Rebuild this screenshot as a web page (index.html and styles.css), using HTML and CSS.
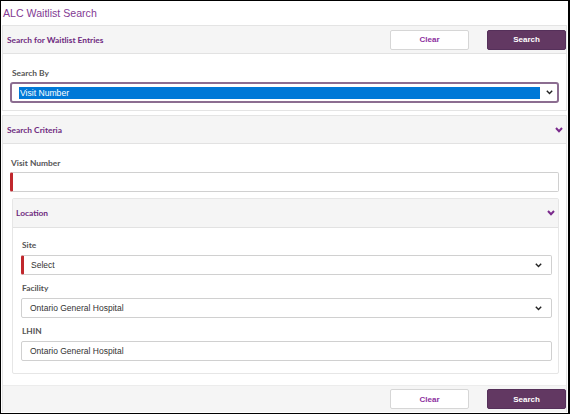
FILE: index.html
```html
<!DOCTYPE html>
<html>
<head>
<meta charset="utf-8">
<link rel="stylesheet" href="styles.css">
</head>
<body>
<div class="frame">
  <div class="title">ALC Waitlist Search</div>

  <div class="panel panel-top">
    <div class="panel-head head-top">
      <span class="head-text">Search for Waitlist Entries</span>
      <div class="actions">
        <button class="btn btn-clear">Clear</button>
        <button class="btn btn-search">Search</button>
      </div>
    </div>
    <div class="panel-body body-top">
      <div class="label">Search By</div>
      <div class="select-focus">
        <span class="highlight">Visit Number</span>
        <svg class="chev" width="7" height="5" viewBox="0 0 7 5"><polyline points="0.8,0.8 3.5,3.6 6.2,0.8" fill="none" stroke="#222" stroke-width="1.4"/></svg>
      </div>
    </div>
  </div>

  <div class="panel panel-criteria">
    <div class="panel-head head-criteria">
      <span class="head-text">Search Criteria</span>
      <svg class="pchev" width="8" height="6" viewBox="0 0 8 6"><polyline points="1,1 4,4.2 7,1" fill="none" stroke="#7a2a8c" stroke-width="2"/></svg>
    </div>
    <div class="panel-body body-criteria">
      <div class="label">Visit Number</div>
      <div class="input required"></div>

      <div class="subpanel">
        <div class="panel-head head-location">
          <span class="head-text">Location</span>
          <svg class="pchev" width="8" height="6" viewBox="0 0 8 6"><polyline points="1,1 4,4.2 7,1" fill="none" stroke="#7a2a8c" stroke-width="2"/></svg>
        </div>
        <div class="sub-body">
          <div class="field">
            <div class="label">Site</div>
            <div class="input select required">
              <span class="value">Select</span>
              <svg class="chev" width="7" height="5" viewBox="0 0 7 5"><polyline points="0.8,0.8 3.5,3.6 6.2,0.8" fill="none" stroke="#222" stroke-width="1.4"/></svg>
            </div>
          </div>
          <div class="field">
            <div class="label">Facility</div>
            <div class="input select">
              <span class="value">Ontario General Hospital</span>
              <svg class="chev" width="7" height="5" viewBox="0 0 7 5"><polyline points="0.8,0.8 3.5,3.6 6.2,0.8" fill="none" stroke="#222" stroke-width="1.4"/></svg>
            </div>
          </div>
          <div class="field">
            <div class="label">LHIN</div>
            <div class="input">
              <span class="value">Ontario General Hospital</span>
            </div>
          </div>
        </div>
      </div>
    </div>
    <div class="panel-foot">
      <button class="btn btn-clear">Clear</button>
      <button class="btn btn-search">Search</button>
    </div>
  </div>
</div>
</body>
</html>
```

FILE: styles.css
```css
* { box-sizing: border-box; }
html, body { margin: 0; padding: 0; background: #fff; }
body { font-family: "Liberation Sans", Arial, sans-serif; }

.frame {
  width: 570px;
  height: 414px;
  border: 1px solid #000;
  border-right-width: 2px;
  overflow: hidden;
  display: flex;
  flex-direction: column;
  background: #fff;
}

.title {
  height: 24px;
  line-height: 24px;
  padding-left: 2px;
  font-size: 10.6px;
  color: #833a93;
  flex: none;
}

.panel {
  margin: 0 1px 0 1px;
  border: 1px solid #e4e4e4;
  flex: none;
}

.panel-head {
  display: flex;
  align-items: center;
  background: #f5f5f5;
  border-bottom: 1px solid #e2e2e2;
}

.head-text {
  font-family: Lato, "Liberation Sans", sans-serif;
  font-weight: bold;
  font-size: 8.4px;
  color: #6e2a80;
}

.head-top {
  height: 28px;
  padding-left: 4px;
}

.actions {
  margin-left: auto;
  display: flex;
  gap: 18px;
  padding-right: 0;
}

.btn {
  width: 79px;
  height: 20px;
  border-radius: 2px;
  font-family: "Liberation Sans", Arial, sans-serif;
  font-weight: bold;
  font-size: 8px;
  padding: 0;
  cursor: pointer;
}
.btn-clear {
  background: #fff;
  border: 1px solid #d6d6d6;
  color: #8d2f9e;
}
.btn-search {
  background: #623862;
  border: 1px solid #55305a;
  color: #fff;
}

.panel-body { display: flex; flex-direction: column; }

.body-top {
  padding: 14px 7px 7px 7px;
}

.label {
  font-family: Lato, "Liberation Sans", sans-serif;
  font-weight: bold;
  font-size: 8.4px;
  color: #555;
  height: 10px;
  line-height: 10px;
  padding-left: 1px;
  margin-bottom: 4px;
}
.body-top .label { padding-left: 2px; }

.select-focus {
  height: 21px;
  border: 2px solid #8c6d91;
  border-radius: 3px;
  display: flex;
  align-items: center;
  padding: 0 4px 0 7px;
}
.highlight {
  flex: 1;
  height: 12px;
  line-height: 12px;
  background: #0078d7;
  color: #fff;
  font-size: 8.6px;
  padding-left: 1px;
}
.select-focus .chev { margin-left: 6px; }

.panel-criteria {
  margin-top: 4px;
  border-bottom: none;
}

.head-criteria {
  height: 28px;
  padding: 0 3px 0 4px;
  justify-content: space-between;
}

.body-criteria {
  padding: 14px 7px 11px 7px;
}
.body-criteria > .label { padding-left: 1px; }

.input {
  height: 20px;
  border: 1px solid #d0d0d0;
  border-radius: 2px;
  display: flex;
  align-items: center;
  padding: 0 9px 0 8px;
  font-size: 8.5px;
  color: #333;
  background: #fff;
}
.input.required {
  border-left: 3px solid #c0282d;
  padding-left: 7px;
}
.input.select { justify-content: space-between; }

.subpanel {
  margin: 6px 0 0 2px;
  border: 1px solid #e6e6e6;
  border-radius: 2px;
}

.head-location {
  height: 29px;
  padding: 0 3px 0 3px;
  justify-content: space-between;
}

.sub-body {
  display: flex;
  flex-direction: column;
  gap: 8px;
  padding: 12px 6px 12px 8px;
}
.sub-body .label { margin-bottom: 5px; padding-left: 1px; }

.panel-foot {
  height: 27px;
  background: #f5f5f5;
  border-top: 1px solid #ececec;
  display: flex;
  align-items: center;
  justify-content: flex-end;
  gap: 18px;
}
```
